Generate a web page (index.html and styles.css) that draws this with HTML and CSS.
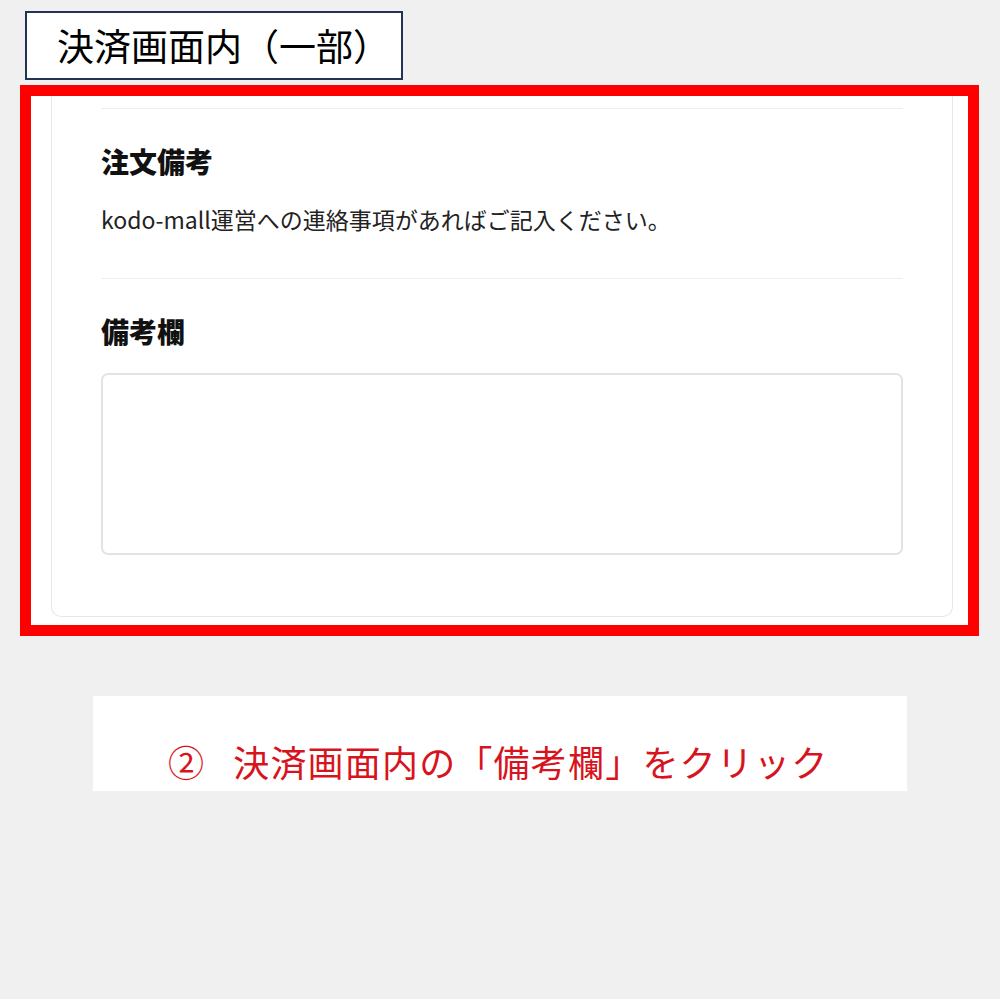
FILE: index.html
```html
<!DOCTYPE html>
<html lang="ja">
<head>
<meta charset="utf-8">
<title>決済画面内（一部）</title>
<link rel="stylesheet" href="styles.css">
</head>
<body>
  <div class="page">
    <div class="label">決済画面内（一部）</div>

    <div class="frame">
      <div class="card">
        <hr class="rule">
        <section class="block block-note">
          <h2 class="block-title">注文備考</h2>
          <p class="block-text">kodo-mall運営への連絡事項があればご記入ください。</p>
        </section>
        <hr class="rule">
        <section class="block block-field">
          <h2 class="block-title">備考欄</h2>
          <textarea class="memo" aria-label="備考欄"></textarea>
        </section>
      </div>
    </div>

    <div class="caption">
      <span class="caption-text"><span class="step">②</span>決済画面内の「備考欄」をクリック</span>
    </div>
  </div>
</body>
</html>
```

FILE: styles.css
```css
* {
  box-sizing: border-box;
}

html, body {
  margin: 0;
  padding: 0;
  background: #f0f0f0;
}

body {
  font-family: "Noto Sans CJK JP", "Noto Sans", sans-serif;
  color: #111;
}

.page {
  display: flex;
  flex-direction: column;
  align-items: flex-start;
  padding-top: 11px;
  height: 999px;
}

/* heading tag above the cropped screen */
.label {
  margin-left: 25px;
  width: 378px;
  height: 69px;
  border: 2px solid #223357;
  background: #fff;
  font-size: 37px;
  line-height: 1;
  padding-left: 30px;
  display: flex;
  align-items: center;
  color: #000;
  white-space: nowrap;
}

/* red highlight around the screen fragment */
.frame {
  margin-top: 5px;
  margin-left: 20px;
  width: 959px;
  height: 551px;
  border: 11px solid #ff0000;
  background: #fff;
  padding: 0 15px 8px 20px;
  display: flex;
  flex-direction: column;
}

.card {
  flex: 1;
  border: 1px solid #e7e7e7;
  border-top: none;
  border-radius: 0 0 10px 10px;
  background: #fff;
  padding: 12px 49px 57px 49px;
  display: flex;
  flex-direction: column;
}

.rule {
  margin: 0;
  border: none;
  border-top: 1px solid #eceef1;
  height: 0;
}

.block {
  display: flex;
  flex-direction: column;
}

.block-note {
  padding-top: 32px;
  padding-bottom: 42px;
}

.block-field {
  padding-top: 32px;
}

.block-title {
  margin: 0;
  font-size: 28px;
  line-height: 40px;
  font-weight: 800;
  color: #111;
}

.block-text {
  margin: 21px 0 0;
  font-size: 23px;
  line-height: 34px;
  color: #222;
  white-space: nowrap;
}

.memo {
  margin-top: 22px;
  width: 802px;
  height: 182px;
  border: 2px solid #e3e3e3;
  border-radius: 7px;
  background: #fff;
  resize: none;
  font: inherit;
  outline: none;
}

/* instruction caption */
.caption {
  margin-top: 60px;
  margin-left: 93px;
  width: 814px;
  height: 95px;
  background: #fff;
  display: flex;
  align-items: flex-end;
  padding-left: 75px;
  padding-bottom: 9px;
}

.caption-text {
  font-size: 36px;
  line-height: 42px;
  color: #d7141d;
  letter-spacing: 1.2px;
  white-space: nowrap;
}

.step {
  margin-right: 28px;
}
```
